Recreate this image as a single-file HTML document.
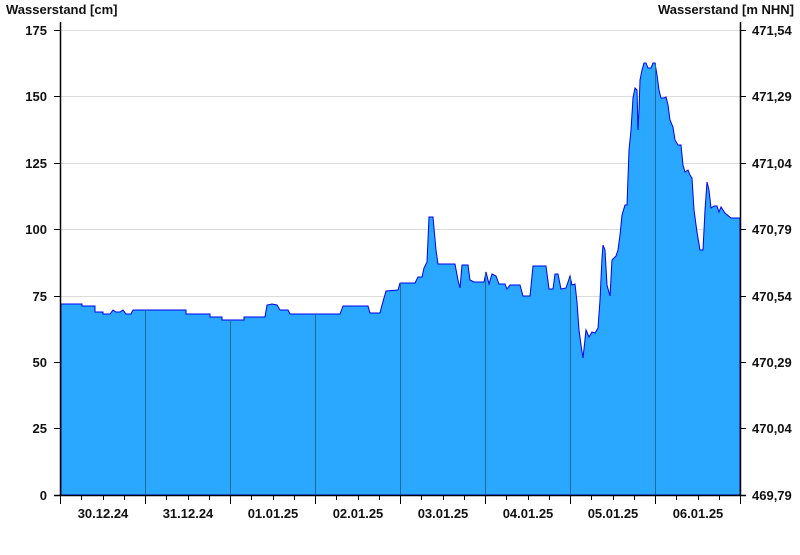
<!DOCTYPE html>
<html><head><meta charset="utf-8"><style>
body{margin:0;background:#fff;width:800px;height:550px;overflow:hidden}
svg text{font-family:"Liberation Sans",Arial,sans-serif;font-weight:bold;font-size:13px;fill:#111}
</style></head><body>
<svg width="800" height="550" xmlns="http://www.w3.org/2000/svg">
<g stroke="#dcdcdc" stroke-width="1">
<line x1="61" y1="30.5" x2="740" y2="30.5"/>
<line x1="61" y1="96.5" x2="740" y2="96.5"/>
<line x1="61" y1="163.5" x2="740" y2="163.5"/>
<line x1="61" y1="229.5" x2="740" y2="229.5"/>
<line x1="61" y1="296.5" x2="740" y2="296.5"/>
<line x1="61" y1="362.5" x2="740" y2="362.5"/>
<line x1="61" y1="428.5" x2="740" y2="428.5"/>
</g>
<polygon fill="#2aa8ff" stroke="#0000ee" stroke-width="1" points="61,304 82,304 82,306 95,306 95,312 103,312 103,314 110,314 113,310 116,312 120,312 123,310 126,314 131,314 133,310 186,310 186,314 210,314 210,317 222,317 222,320 244,320 244,317 265,317 267,305 272,304 277,305 280,310 288,310 290,314 340,314 343,306 368,306 370,313 380,313 382,305 386,291 398,290 400,283 415,283 418,277 422,277 424,268 427,262 429,217 433,217 436,250 438,264 455,264 458,280 460,288 462,265 468,265 470,280 474,282 484,282 486,272 489,284 492,274 496,276 499,284 505,284 507,289 510,285 520,285 523,296 530,296 533,266 546,266 549,289 553,289 555,274 558,274 561,289 566,288 568,282 570,276 572,285 575,284 577,302 579,330 581,345 583,358 586,330 589,337 592,332 595,333 598,328 600,300 602,258 603,245 605,250 607,285 610,296 612,260 616,256 618,250 620,235 622,215 625,205 627,205 629,150 631,130 633,98 635,88 637,90 638,130 639,110 640,80 642,70 644,63 646,63 648,68 651,68 653,63 655,63 657,75 659,90 661,98 664,98 666,97 668,105 670,120 673,127 675,140 678,145 681,145 683,165 685,172 688,170 690,175 692,178 694,210 697,232 700,250 703,250 705,210 707,182 709,190 711,208 714,206 717,206 719,212 721,207 725,213 731,218 740,218 740,495 61,495"/>
<g stroke="#1e6a96" stroke-width="1">
<line x1="145.5" y1="310" x2="145.5" y2="495"/>
<line x1="230.5" y1="320" x2="230.5" y2="495"/>
<line x1="315.5" y1="314" x2="315.5" y2="495"/>
<line x1="400.5" y1="283" x2="400.5" y2="495"/>
<line x1="485.5" y1="272" x2="485.5" y2="495"/>
<line x1="570.5" y1="276" x2="570.5" y2="495"/>
<line x1="655.5" y1="63" x2="655.5" y2="495"/>
</g>
<g stroke="#000" stroke-width="1.5">
<line x1="60.5" y1="22" x2="60.5" y2="496"/>
<line x1="740.5" y1="22" x2="740.5" y2="496"/>
<line x1="54" y1="495.5" x2="746" y2="495.5"/>
</g>
<g stroke="#000" stroke-width="1">
<line x1="54" y1="30.5" x2="61" y2="30.5"/><line x1="54" y1="96.5" x2="61" y2="96.5"/><line x1="54" y1="163.5" x2="61" y2="163.5"/><line x1="54" y1="229.5" x2="61" y2="229.5"/><line x1="54" y1="296.5" x2="61" y2="296.5"/><line x1="54" y1="362.5" x2="61" y2="362.5"/><line x1="54" y1="428.5" x2="61" y2="428.5"/>
<line x1="740" y1="30.5" x2="746" y2="30.5"/><line x1="740" y1="96.5" x2="746" y2="96.5"/><line x1="740" y1="163.5" x2="746" y2="163.5"/><line x1="740" y1="229.5" x2="746" y2="229.5"/><line x1="740" y1="296.5" x2="746" y2="296.5"/><line x1="740" y1="362.5" x2="746" y2="362.5"/><line x1="740" y1="428.5" x2="746" y2="428.5"/>
<line x1="60.5" y1="495" x2="60.5" y2="504"/><line x1="145.5" y1="495" x2="145.5" y2="504"/><line x1="230.5" y1="495" x2="230.5" y2="504"/><line x1="315.5" y1="495" x2="315.5" y2="504"/><line x1="400.5" y1="495" x2="400.5" y2="504"/><line x1="485.5" y1="495" x2="485.5" y2="504"/><line x1="570.5" y1="495" x2="570.5" y2="504"/><line x1="655.5" y1="495" x2="655.5" y2="504"/><line x1="740.5" y1="495" x2="740.5" y2="504"/>
<g id="m"><line x1="81.5" y1="495" x2="81.5" y2="500"/><line x1="103.5" y1="495" x2="103.5" y2="500"/><line x1="124.5" y1="495" x2="124.5" y2="500"/></g>
<use href="#m" x="85"/><use href="#m" x="170"/><use href="#m" x="255"/><use href="#m" x="340"/><use href="#m" x="425"/><use href="#m" x="510"/><use href="#m" x="595"/>
</g>
<text x="6" y="14">Wasserstand [cm]</text>
<text x="794" y="14" text-anchor="end">Wasserstand [m NHN]</text>
<g text-anchor="end">
<text x="47" y="35">175</text><text x="47" y="101">150</text><text x="47" y="168">125</text><text x="47" y="234">100</text><text x="47" y="301">75</text><text x="47" y="367">50</text><text x="47" y="433">25</text><text x="47" y="500">0</text>
</g>
<g>
<text x="752" y="35">471,54</text><text x="752" y="101">471,29</text><text x="752" y="168">471,04</text><text x="752" y="234">470,79</text><text x="752" y="301">470,54</text><text x="752" y="367">470,29</text><text x="752" y="433">470,04</text><text x="752" y="500">469,79</text>
</g>
<g text-anchor="middle">
<text x="103" y="518">30.12.24</text><text x="188" y="518">31.12.24</text><text x="273" y="518">01.01.25</text><text x="358" y="518">02.01.25</text><text x="443" y="518">03.01.25</text><text x="528" y="518">04.01.25</text><text x="613" y="518">05.01.25</text><text x="698" y="518">06.01.25</text>
</g>
</svg>
</body></html>
